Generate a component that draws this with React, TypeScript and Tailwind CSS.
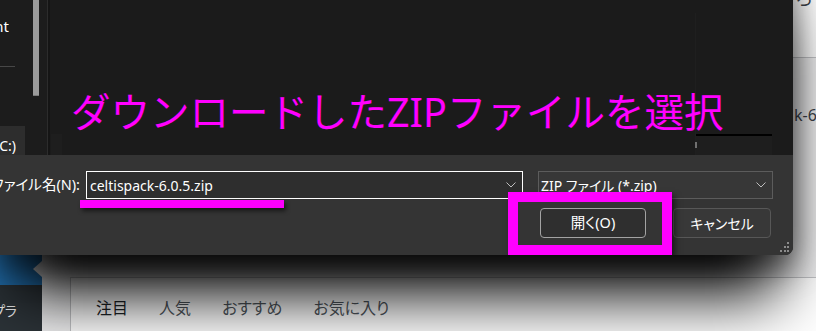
import React from 'react';

const Chevron = () => (
  <svg width="10" height="6" viewBox="0 0 10 6" fill="none" className="shrink-0">
    <path d="M0.5 0.5 L5 5 L9.5 0.5" stroke="#bdbdbd" strokeWidth="1" />
  </svg>
);

const Grip = () => (
  <svg width="12" height="12" viewBox="0 0 12 12" className="shrink-0">
    <rect x="9" y="1" width="2" height="2" fill="#8c8c8c" />
    <rect x="6" y="5" width="2" height="2" fill="#8c8c8c" />
    <rect x="9" y="5" width="2" height="2" fill="#8c8c8c" />
    <rect x="2" y="9" width="2" height="2" fill="#8c8c8c" />
    <rect x="6" y="9" width="2" height="2" fill="#8c8c8c" />
    <rect x="9" y="9" width="2" height="2" fill="#8c8c8c" />
  </svg>
);

function FileDialog() {
  // the window carries on above the crop, so it starts 60px higher
  return (
    <div className="relative z-10 w-[793px] h-[315px] mt-[-60px] shrink-0 bg-[#1b1b1b] rounded-br-[8px] overflow-hidden flex flex-col shadow-[0_55px_60px_-15px_rgba(0,0,0,1),0_12px_30px_rgba(0,0,0,0.5)]">
      <div className="h-[60px] shrink-0 bg-[#1b1b1b]" />
      {/* top: nav pane + file list */}
      <div className="h-[155px] flex shrink-0">
        <div className="w-[47px] bg-[#1c1c1c] flex overflow-hidden">
          <div className="w-[33px] flex flex-col">
            <div className="mt-[17px] w-[9px] h-[18px] shrink-0 overflow-hidden flex justify-end whitespace-nowrap text-[15px] leading-[18px] text-white">
              Document
            </div>
            <div className="mt-[31px] h-px w-[15px] shrink-0 bg-[#474747]" />
            <div className="mt-[59px] h-[40px] w-[25px] shrink-0 bg-[#2d2d2d] flex items-center">
              <div className="w-[16px] overflow-hidden flex justify-end whitespace-nowrap text-[14px] leading-[18px] text-white">
                ローカル ディスク (C:)
              </div>
            </div>
          </div>
          <div className="w-[6px]">
            <div className="h-[96px] bg-[#9b9b9b] border-b border-[#7a7a7a]" />
          </div>
        </div>
        <div className="w-[3px] border-l border-[#2c2c2c] bg-[#151515]" />
        <div className="flex-1 relative flex">
          <div className="flex-1 flex flex-col justify-end">
            <div className="ml-[1px] w-[11px] h-[21px] bg-[#1e1e1e]" />
          </div>
          <div className="w-[98px] mt-[13px] border-l border-[#1f1f1f] flex flex-col justify-end">
            <div className="h-[21px] w-[76px] bg-[#1e1e1e] border-t-2 border-black">
              <div className="w-[2px] h-[6px] bg-[#707070] mt-[6px] ml-[-1px]" />
            </div>
          </div>
          <div className="absolute left-[21px] top-[92px] whitespace-nowrap text-[39.5px] leading-[40px] text-[#ff00ff] [font-feature-settings:normal]">
            ダウンロードしたZIPファイルを選択
          </div>
        </div>
      </div>

      {/* bottom: file name + buttons */}
      <div className="flex-1 bg-[#343434] flex flex-col relative">
        <div className="mt-[16px] h-[28px] flex items-stretch">
          <div className="w-[80px] overflow-hidden flex justify-end items-center whitespace-nowrap text-[14.5px] text-white">
            ファイル名(N):
          </div>
          <div className="ml-[6px] w-[437px] border border-white bg-[#2e2e2e] flex items-center pl-[3px] pr-[6px] text-[14px] text-white">
            <span>celtispack-6.0.5.zip</span>
            <span className="ml-auto"><Chevron /></span>
          </div>
          <div className="ml-[15px] w-[235px] border border-[#5c5c5c] bg-[#373737] flex items-center pl-[2px] pr-[6px] text-[14px] text-white">
            <span>ZIP ファイル (*.zip)</span>
            <span className="ml-auto"><Chevron /></span>
          </div>
        </div>
        <div className="mt-[9px] flex justify-end gap-[27px] pr-[22px]">
          <button className="w-[106px] h-[30px] rounded-[4px] border border-[#a3a3a3] bg-[#2f2f2f] text-white text-[14.5px]">
            開く(O)
          </button>
          <button className="w-[98px] h-[30px] rounded-[4px] border border-[#575757] bg-[#383838] text-white text-[14px]">
            キャンセル
          </button>
        </div>
        <div className="absolute right-[3px] bottom-[2px]">
          <Grip />
        </div>
      </div>

      {/* annotations (page coords + 60px) */}
      <div className="absolute left-[80px] top-[260px] w-[204px] h-[8px] bg-[#ff00ff] shadow-[2px_3px_4px_rgba(0,0,0,0.55)]" />
      <div className="absolute left-[508px] top-[252px] w-[164px] h-[63px] border-[10px] border-[#ff00ff] shadow-[3px_4px_6px_rgba(0,0,0,0.55)]" />
    </div>
  );
}

export default function App() {
  const tabs = ['注目', '人気', 'おすすめ', 'お気に入り'];
  return (
    <div className="w-[816px] h-[331px] overflow-hidden bg-[#f0f0f1] flex flex-col font-['Noto_Sans','Noto_Sans_CJK_JP',sans-serif] [font-feature-settings:'palt']">
      <div className="flex h-[255px] shrink-0">
        <FileDialog />
        <div className="flex-1 flex flex-col overflow-hidden text-[#3c434a]">
          <div className="h-[58px] shrink-0 border-b border-[#c3c4c7] overflow-hidden bg-white">
            <div className="mt-[-14px] pl-[3px] text-[18px] leading-[24px]">ろ</div>
          </div>
          <div className="mt-[47px] whitespace-nowrap text-[16px] leading-[20px] pl-[1px]">k-6.0.5.zip</div>
        </div>
      </div>
      <div className="flex flex-1">
        <div className="w-[42px] bg-[#2c3338] flex flex-col">
          <div className="h-[30px] shrink-0 bg-[#2271b1] relative">
            <div className="absolute right-0 top-[6px] w-0 h-0 border-y-[8px] border-y-transparent border-r-[9px] border-r-[#f0f0f1]" />
          </div>
          <div className="mt-[17px] ml-[-8px] whitespace-nowrap text-[14px] leading-[18px] text-[#f0f0f1]">プラ</div>
        </div>
        <div className="flex-1 pl-[28px] pt-[22px] flex">
          <div className="flex-1 border-l border-t border-[#c3c4c7] bg-white pl-[25px] pt-[20px] flex gap-[31px] text-[16px] leading-[20px]">
            {tabs.map((t, i) => (
              <span key={t} className={i === 0 ? 'text-[#1d2327]' : 'text-[#50575e]'}>
                {t}
              </span>
            ))}
          </div>
        </div>
      </div>
    </div>
  );
}
